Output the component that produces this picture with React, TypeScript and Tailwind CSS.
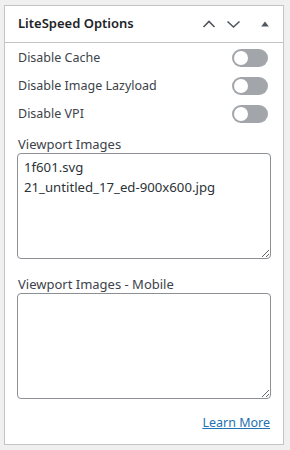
import React from "react";

const font = { fontFamily: '"Noto Sans", "Open Sans", sans-serif' };

function Toggle() {
  return (
    <span className="relative inline-block w-[36px] h-[18px] rounded-full bg-[#a2a6aa]">
      <span className="absolute left-[2px] top-[2px] w-[14px] h-[14px] rounded-full bg-white" />
    </span>
  );
}

export default function App() {
  const toggles = ["Disable Cache", "Disable Image Lazyload", "Disable VPI"];

  return (
    <div className="w-[290px] h-[450px] bg-[#f0f0f1] pt-[5px] pl-[4px]" style={font}>
      <div className="w-[280px] h-[440px] bg-white border border-[#c3c4c7] flex flex-col">
        {/* Header */}
        <div className="h-[37px] flex items-center border-b border-[#c3c4c7] pl-[13px] pr-[14px]">
          <h2 className="flex-1 text-[13px] font-semibold text-[#1d2327]">LiteSpeed Options</h2>
          <div className="flex items-center text-[#50575e]">
            <svg width="14" height="14" viewBox="0 0 14 14" className="mr-[10px]">
              <path d="M1.5 10 L7 4.5 L12.5 10" fill="none" stroke="currentColor" strokeWidth="1.6" />
            </svg>
            <svg width="15" height="14" viewBox="0 0 15 14" className="mr-[20px]">
              <path d="M1.5 4.5 L7.5 10 L13.5 4.5" fill="none" stroke="currentColor" strokeWidth="1.6" />
            </svg>
            <svg width="8" height="6" viewBox="0 0 8 6">
              <path d="M4 0.5 L7.8 5.5 L0.2 5.5 Z" fill="currentColor" />
            </svg>
          </div>
        </div>

        {/* Body */}
        <div className="flex-1 flex flex-col px-[12px] pt-[1px] text-[13px] text-[#3c434a]">
          {toggles.map((t) => (
            <div key={t} className="h-[28px] flex items-center justify-between pl-[1px] pr-[3px]">
              <span className="text-[12.5px]">{t}</span>
              <Toggle />
            </div>
          ))}

          <label className="mt-[7px] leading-[18px] pl-[1px]">Viewport Images</label>
          <textarea
            className="block w-[254px] h-[106px] border border-[#8c8f94] rounded-[4px] px-[6px] py-[3px] leading-[20px] text-[13.2px] text-[#2c3338] outline-none"
            defaultValue={"1f601.svg\n21_untitled_17_ed-900x600.jpg"}
          />

          <label className="mt-[16px] leading-[18px] pl-[1px]">Viewport Images - Mobile</label>
          <textarea
            className="block w-[254px] h-[106px] border border-[#8c8f94] rounded-[4px] px-[6px] py-[3px] leading-[20px] text-[13.2px] outline-none"
            defaultValue=""
          />

          <div className="flex justify-end mt-[15px] pr-[1px]">
            <a href="#" className="text-[12.5px] text-[#2271b1] underline">Learn More</a>
          </div>
        </div>
      </div>
    </div>
  );
}
